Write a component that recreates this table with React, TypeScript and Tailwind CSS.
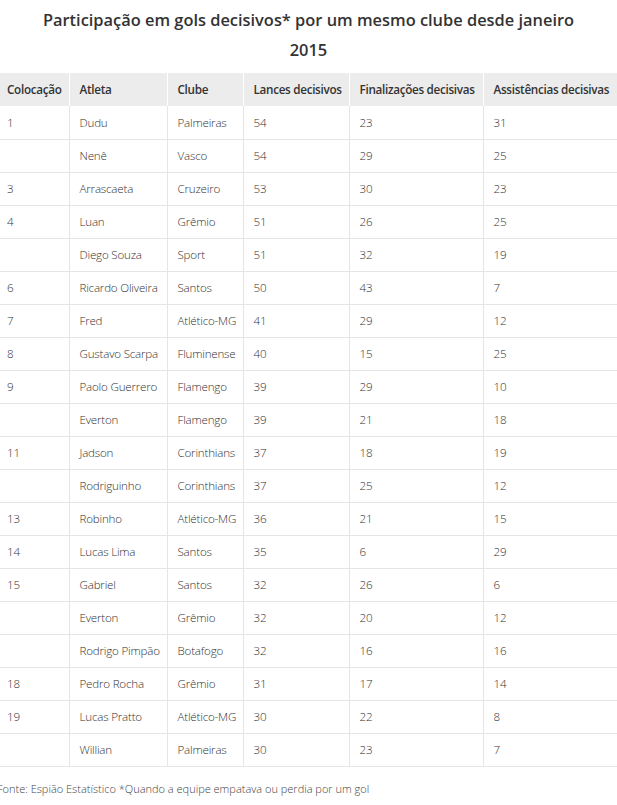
import React from 'react';

const rows: [string, string, string, number, number, number][] = [
  ['1', 'Dudu', 'Palmeiras', 54, 23, 31],
  ['', 'Nenê', 'Vasco', 54, 29, 25],
  ['3', 'Arrascaeta', 'Cruzeiro', 53, 30, 23],
  ['4', 'Luan', 'Grêmio', 51, 26, 25],
  ['', 'Diego Souza', 'Sport', 51, 32, 19],
  ['6', 'Ricardo Oliveira', 'Santos', 50, 43, 7],
  ['7', 'Fred', 'Atlético-MG', 41, 29, 12],
  ['8', 'Gustavo Scarpa', 'Fluminense', 40, 15, 25],
  ['9', 'Paolo Guerrero', 'Flamengo', 39, 29, 10],
  ['', 'Everton', 'Flamengo', 39, 21, 18],
  ['11', 'Jadson', 'Corinthians', 37, 18, 19],
  ['', 'Rodriguinho', 'Corinthians', 37, 25, 12],
  ['13', 'Robinho', 'Atlético-MG', 36, 21, 15],
  ['14', 'Lucas Lima', 'Santos', 35, 6, 29],
  ['15', 'Gabriel', 'Santos', 32, 26, 6],
  ['', 'Everton', 'Grêmio', 32, 20, 12],
  ['', 'Rodrigo Pimpão', 'Botafogo', 32, 16, 16],
  ['18', 'Pedro Rocha', 'Grêmio', 31, 17, 14],
  ['19', 'Lucas Pratto', 'Atlético-MG', 30, 22, 8],
  ['', 'Willian', 'Palmeiras', 30, 23, 7],
];

const headers = ['Colocação', 'Atleta', 'Clube', 'Lances decisivos', 'Finalizações decisivas', 'Assistências decisivas'];
const widths = ['w-[72px]', 'w-[98px]', 'w-[76px]', 'w-[106px]', 'w-[134px]', 'w-[134px]'];

export default function App() {
  return (
    <div className="w-[617px] h-[805px] overflow-hidden bg-white font-['Open_Sans',sans-serif] text-[#333]">
      <h2 className="pt-[5px] text-center text-[16.4px] font-semibold leading-[30px] text-[#333]">
        Participação em gols decisivos* por um mesmo clube desde janeiro
        <br />
        2015
      </h2>

      <table className="-ml-[3px] mt-[8px] w-[620px] table-fixed border-collapse">
        <colgroup>
          {widths.map((w, i) => (
            <col key={i} className={w} />
          ))}
        </colgroup>
        <thead>
          <tr className="h-[33px] bg-[#ececec]">
            {headers.map((h, i) => (
              <th
                key={h}
                className={`border-l border-white pl-[10px] text-left text-[11.7px] font-semibold tracking-[-0.3px] whitespace-nowrap text-[#333] ${i === 0 ? 'border-l-0' : ''}`}
              >
                {h}
              </th>
            ))}
          </tr>
        </thead>
        <tbody>
          {rows.map((r, idx) => (
            <tr key={idx} className="h-[33px] border-b border-[#e5e5e5]">
              {r.map((c, i) => (
                <td
                  key={i}
                  className={`pl-[10px] pt-[1px] text-[11.6px] font-light tracking-[-0.2px] whitespace-nowrap text-[#333] ${i === 0 ? '' : 'border-l border-[#e5e5e5]'}`}
                >
                  {c}
                </td>
              ))}
            </tr>
          ))}
        </tbody>
      </table>

      <p className="-ml-[3px] mt-[14px] text-[11px] font-light text-[#444]">
        Fonte: Espião Estatístico *Quando a equipe empatava ou perdia por um gol
      </p>
    </div>
  );
}
